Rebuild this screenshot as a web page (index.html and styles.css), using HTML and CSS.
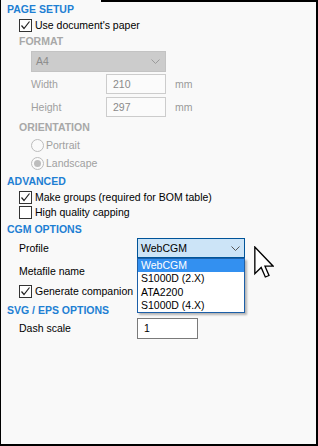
FILE: index.html
```html
<!DOCTYPE html>
<html>
<head>
<meta charset="utf-8">
<link rel="stylesheet" href="styles.css">
</head>
<body>
<div class="frame">
  <div class="head h-page">PAGE SETUP</div>
  <div class="row chk-row r-usedoc"><span class="cb checked"><svg viewBox="0 0 11 11"><path d="M1.5 5.5 L4 8.5 L9.5 1.5" /></svg></span><span class="lbl">Use document's paper</span></div>
  <div class="sub r-format">FORMAT</div>
  <div class="select dis r-a4"><span>A4</span><svg class="chev" viewBox="0 0 9 5"><path d="M0.5 0.5 L4.5 4.5 L8.5 0.5" /></svg></div>
  <div class="row field r-width"><span class="flbl dis-t">Width</span><span class="inp dis-inp">210</span><span class="unit">mm</span></div>
  <div class="row field r-height"><span class="flbl dis-t">Height</span><span class="inp dis-inp">297</span><span class="unit">mm</span></div>
  <div class="sub r-orient">ORIENTATION</div>
  <div class="row radio-row r-portrait"><span class="rb"></span><span class="dis-t">Portrait</span></div>
  <div class="row radio-row r-landscape"><span class="rb on"></span><span class="dis-t">Landscape</span></div>
  <div class="head r-adv">ADVANCED</div>
  <div class="row chk-row r-groups"><span class="cb checked"><svg viewBox="0 0 11 11"><path d="M1.5 5.5 L4 8.5 L9.5 1.5" /></svg></span><span class="lbl">Make groups (required for BOM table)</span></div>
  <div class="row chk-row r-capping"><span class="cb"></span><span class="lbl">High quality capping</span></div>
  <div class="head r-cgm">CGM OPTIONS</div>
  <div class="row field2 r-profile"><span class="flbl2">Profile</span><span class="select focus"><span>WebCGM</span><svg class="chev" viewBox="0 0 9 5"><path d="M0.5 0.5 L4.5 4.5 L8.5 0.5" /></svg></span>
    <ul class="drop">
      <li class="sel">WebCGM</li>
      <li>S1000D (2.X)</li>
      <li>ATA2200</li>
      <li>S1000D (4.X)</li>
    </ul>
  </div>
  <div class="row field2 r-meta"><span class="flbl2">Metafile name</span><span class="inp2"></span></div>
  <div class="row chk-row r-companion"><span class="cb checked"><svg viewBox="0 0 11 11"><path d="M1.5 5.5 L4 8.5 L9.5 1.5" /></svg></span><span class="lbl">Generate companion</span></div>
  <div class="head r-svg">SVG / EPS OPTIONS</div>
  <div class="row field2 r-dash"><span class="flbl2">Dash scale</span><span class="inp3">1</span></div>
  <svg class="cursor" viewBox="0 0 12 19"><path d="M0.5 0.5 L0.5 16.5 L4.3 12.8 L6.8 18.5 L9 17.6 L6.6 12 L11.5 12 Z" /></svg>
</div>
</body>
</html>
```

FILE: styles.css
```css
* { box-sizing: border-box; }
html, body { margin: 0; padding: 0; }
body {
  background: #f9f9f9;
  font-family: "Liberation Sans", Arial, sans-serif;
  font-size: 10.5px;
  line-height: 13px;
  color: #000;
}
.frame {
  position: relative;
  width: 318px;
  height: 446px;
  border-right: 2px solid #000;
  border-bottom: 2px solid #000;
  border-left: 1px solid #000;
  padding: 3px 0 0 6px;
  overflow: hidden;
}
.frame::before {
  content: "";
  position: absolute;
  top: 0;
  left: 100px;
  right: 0;
  height: 2px;
  background: #000;
}
.head {
  font-weight: bold;
  font-size: 10.5px;
  color: #1e7fd3;
  height: 13px;
}
.sub {
  font-weight: bold;
  color: #a8a8a8;
  height: 13px;
  margin-left: 12px;
}
.row { display: flex; align-items: center; }
.chk-row { height: 13px; margin-left: 12px; }
.cb {
  width: 13px; height: 13px;
  border: 1px solid #333;
  background: #fff;
  margin-right: 3px;
  display: flex;
  align-items: center;
  justify-content: center;
  flex: none;
}
.cb svg { width: 11px; height: 11px; }
.cb path { fill: none; stroke: #222; stroke-width: 1.2; }
.lbl { white-space: nowrap; }
.r-usedoc { margin-top: 3px; }
.r-format { margin-top: 3px; }
.select {
  display: flex;
  align-items: center;
  justify-content: space-between;
  height: 21px;
  width: 135px;
  padding: 0 5px 0 4px;
}
.select.dis {
  margin: 3px 0 0 24px;
  background: #cccccc;
  border: 1px solid #c3c3c3;
  color: #8a8a8a;
}
.chev { width: 9px; height: 5px; }
.chev path { fill: none; stroke: #555; stroke-width: 1; }
.dis .chev path { stroke: #9a9a9a; }
.dis-t { color: #a0a0a0; }
.field { height: 20px; margin-left: 24px; }
.r-width { margin-top: 2px; }
.r-height { margin-top: 3px; }
.flbl { width: 75px; }
.inp {
  width: 60px; height: 20px;
  border: 1px solid #cccccc;
  padding: 0 0 0 6px;
  display: flex; align-items: center;
}
.dis-inp { color: #8a8a8a; background: #fbfbfb; }
.unit { color: #9a9a9a; margin-left: 9px; }
.r-orient { margin-top: 4px; }
.radio-row { height: 13px; margin-left: 24px; }
.r-portrait { margin-top: 5px; }
.r-landscape { margin-top: 5px; }
.rb {
  width: 13px; height: 13px;
  border: 1px solid #bcbcbc;
  border-radius: 50%;
  background: #fafafa;
  margin-right: 2px;
  display: flex; align-items: center; justify-content: center;
}
.rb.on::after {
  content: "";
  width: 7px; height: 7px;
  border-radius: 50%;
  background: #bdbdbd;
}
.r-adv { margin-top: 5px; }
.r-groups { margin-top: 3px; }
.r-capping { margin-top: 2px; }
.r-cgm { margin-top: 4px; }
.field2 { height: 20px; margin-left: 12px; position: relative; }
.flbl2 { width: 118px; }
.r-profile { margin-top: 2px; }
.select.focus {
  width: 108px;
  height: 20px;
  background: #cce4f7;
  border: 1px solid #005499;
  padding: 0 4px 0 3px;
}
.drop {
  position: absolute;
  left: 118px;
  top: 20px;
  width: 108px;
  margin: 0;
  padding: 0;
  list-style: none;
  background: #fff;
  border: 1px solid #1c5fa8;
  box-shadow: 2px 2px 2px rgba(0,0,0,0.28);
  z-index: 3;
}
.drop li { height: 13.3px; line-height: 13px; padding-left: 3px; }
.drop li.sel { background: #3390f0; color: #fff; }
.r-meta { margin-top: 3px; }
.inp2 { width: 108px; height: 20px; border: 1px solid #7a7a7a; background: #fff; }
.r-companion { margin-top: 4px; }
.r-svg { margin-top: 6px; }
.r-dash { margin-top: 1px; }
.inp3 {
  width: 61px; height: 21px;
  border: 1px solid #7a7a7a;
  background: #fff;
  padding-left: 6px;
  display: flex; align-items: center;
}
.cursor {
  position: absolute;
  left: 253px;
  top: 246px;
  width: 20px;
  height: 32px;
}
.cursor path { fill: #fff; stroke: #000; stroke-width: 0.8; stroke-linejoin: miter; }
```
